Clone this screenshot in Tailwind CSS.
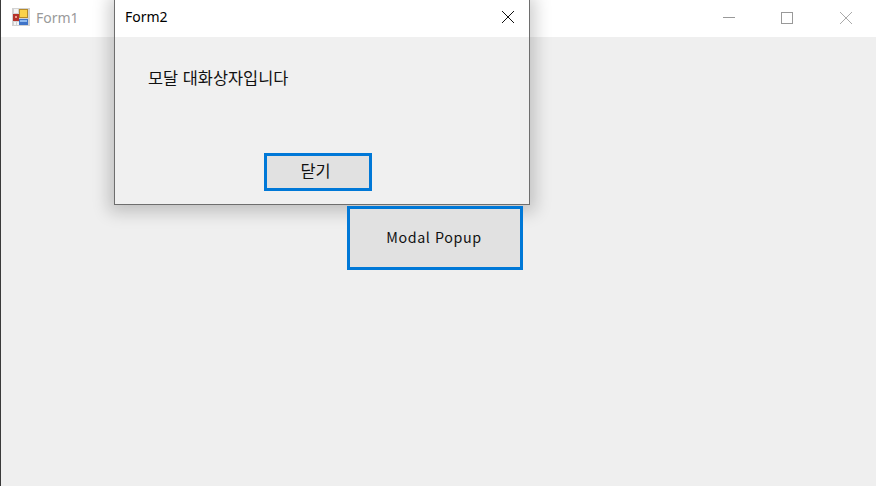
<!DOCTYPE html>
<html lang="ko">
<head>
<meta charset="utf-8">
<script src="https://cdn.jsdelivr.net/npm/@tailwindcss/browser@4"></script>
<title>Form1</title>
</head>
<body class="m-0 overflow-hidden">
<div class="relative w-[876px] h-[486px] bg-[#efefef] overflow-hidden border-l border-[#3a3a3a] font-['Noto_Sans_CJK_KR','Noto_Sans',sans-serif]">
  <div class="flex items-center h-[37px] bg-white">
    <svg class="ml-[11px] mb-[3px] w-[18px] h-[18px]" viewBox="0 0 18 18">
      <rect width="18" height="18" fill="#d2d2d2"/>
      <rect x="2" y="1" width="4" height="4" fill="#f4f4f4"/>
      <rect x="1" y="6" width="6" height="7" fill="#b5322a"/>
      <rect x="3" y="8" width="2" height="2" fill="#e8a090"/>
      <rect x="2" y="14" width="2" height="3" fill="#f4f4f4"/>
      <rect x="5" y="14" width="2" height="3" fill="#f4f4f4"/>
      <rect x="7" y="1" width="9" height="9" fill="#b58a2a"/>
      <rect x="8" y="2" width="7" height="7" fill="#fbd24a"/>
      <rect x="7" y="11" width="9" height="6" fill="#3f74c8"/>
      <rect x="8" y="12" width="7" height="2" fill="#8fbaf0"/>
    </svg>
    <span class="ml-[6px] mb-[2px] text-[14px] leading-none text-[#9a9a9a] font-['Noto_Sans',sans-serif]">Form1</span>
    <div class="ml-auto flex items-center">
      <svg class="w-[58px] h-[37px]" viewBox="0 0 58 37"><path d="M23 17.5H35" stroke="#999" fill="none"/></svg>
      <svg class="w-[58px] h-[37px]" viewBox="0 0 58 37"><rect x="23.5" y="12.5" width="11" height="11" stroke="#999" fill="none"/></svg>
      <svg class="w-[60px] h-[37px]" viewBox="0 0 60 37"><path d="M24 12L36 24M36 12L24 24" stroke="#aaa" fill="none"/></svg>
    </div>
  </div>

  <div class="absolute left-[113px] top-[-1px] w-[416px] h-[206px] bg-[#f0f0f0] border border-[#6e6e6e] flex flex-col shadow-[0_2px_16px_5px_rgba(0,0,0,0.2)]">
    <div class="flex items-center justify-between h-[37px] bg-white pl-[10px] pr-[14px] pb-[3px]">
      <span class="text-[14px] leading-none text-black font-['Noto_Sans',sans-serif]">Form2</span>
      <svg class="w-[14px] h-[14px]" viewBox="0 0 14 14"><path d="M1 1L13 13M13 1L1 13" stroke="#111" fill="none"/></svg>
    </div>
    <div class="flex-1 flex flex-col">
      <p class="ml-[33px] mt-[29px] text-[16.4px] leading-[22px] text-[#111]">모달 대화상자입니다</p>
      <button class="self-start ml-[149px] mt-[65px] w-[108px] h-[38px] flex items-center justify-center bg-[#e1e1e1] border-[3px] border-[#0078d7] text-[16.4px] leading-none text-[#111] pr-[5px] pb-[3px]">닫기</button>
    </div>
  </div>

  <button class="absolute left-[346px] top-[206px] w-[176px] h-[64px] flex items-center justify-center bg-[#e1e1e1] border-[3px] border-[#0078d7] text-[14.3px] tracking-[0.6px] leading-none text-[#111] pr-[2px] pb-[2px]">Modal Popup</button>
</div>
</body>
</html>
